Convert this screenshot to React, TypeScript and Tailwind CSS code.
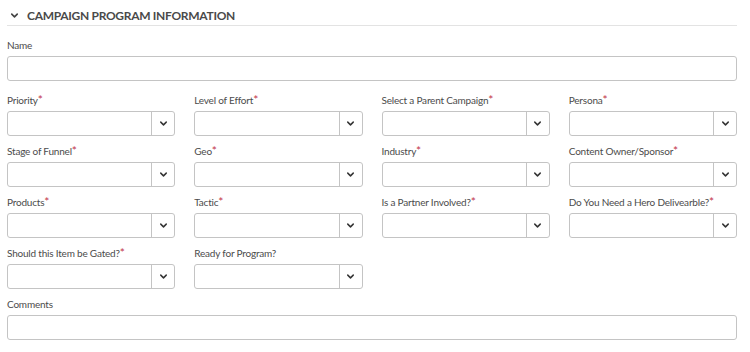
import { ChevronDown } from "lucide-react";

type Field = { label: string; required?: boolean };

const rows: Field[][] = [
  [
    { label: "Priority", required: true },
    { label: "Level of Effort", required: true },
    { label: "Select a Parent Campaign", required: true },
    { label: "Persona", required: true },
  ],
  [
    { label: "Stage of Funnel", required: true },
    { label: "Geo", required: true },
    { label: "Industry", required: true },
    { label: "Content Owner/Sponsor", required: true },
  ],
  [
    { label: "Products", required: true },
    { label: "Tactic", required: true },
    { label: "Is a Partner Involved?", required: true },
    { label: "Do You Need a Hero Delivearble?", required: true },
  ],
  [
    { label: "Should this Item be Gated?", required: true },
    { label: "Ready for Program?" },
  ],
];

function Label({ field }: { field: Field }) {
  return (
    <div className="text-[10px] leading-[14px] tracking-[-0.2px] text-[#4b4b4b] mb-[4px] whitespace-nowrap">
      {field.label}
      {field.required && <span className="text-[#c2364a] text-[12px]">*</span>}
    </div>
  );
}

function SelectBox() {
  return (
    <div className="flex h-[25px] rounded-[3px] border border-[#c4c4c4] bg-white">
      <div className="flex-1" />
      <div className="flex w-[23px] items-center justify-center border-l border-[#c4c4c4]">
        <ChevronDown size={11} strokeWidth={3.2} className="text-[#333]" />
      </div>
    </div>
  );
}

export default function App() {
  return (
    <div
      className="w-[750px] h-[352px] bg-white pl-[7px] pr-[13px] pt-[7px]"
      style={{ fontFamily: "Lato, 'Open Sans', sans-serif" }}
    >
      <div className="flex items-center gap-[7px] pl-[2px] h-[17px]">
        <ChevronDown size={11} strokeWidth={3.5} className="text-[#444]" />
        <h2 className="text-[12px] font-bold tracking-[-0.3px] text-[#4a4a4a] uppercase">
          Campaign Program Information
        </h2>
      </div>
      <div className="mt-[1px] h-px bg-[#e3e3e3]" />

      <div className="mt-[12px]">
        <Label field={{ label: "Name" }} />
        <div className="h-[25px] rounded-[3px] border border-[#c4c4c4]" />
      </div>

      <div className="mt-[12px] flex flex-col gap-y-[8px]">
        {rows.map((row, i) => (
          <div key={i} className="grid grid-cols-4 gap-x-[19px]">
            {row.map((f) => (
              <div key={f.label}>
                <Label field={f} />
                <SelectBox />
              </div>
            ))}
          </div>
        ))}
        <div>
          <Label field={{ label: "Comments" }} />
          <div className="h-[25px] rounded-[3px] border border-[#c4c4c4]" />
        </div>
      </div>
    </div>
  );
}
